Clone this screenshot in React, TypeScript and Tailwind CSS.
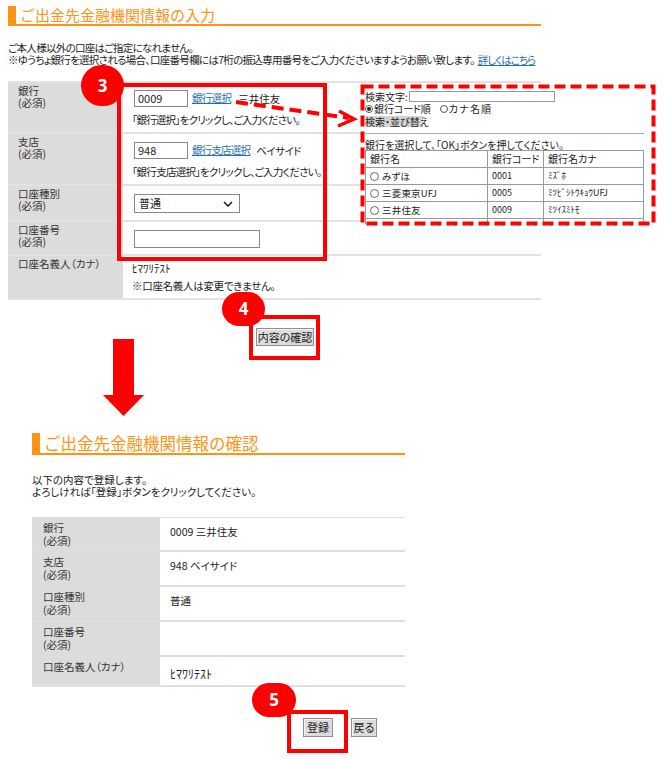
const FONT = "[font-family:'Noto_Sans_CJK_JP','Liberation_Sans',sans-serif] [font-feature-settings:'palt']";

function Heading({ text, className, textClass }: { text: string; className: string; textClass: string }) {
  return (
    <div className={`flex items-stretch border-b-2 border-[#ff9313] ${className}`}>
      <div className="w-[8px] bg-[#ff9313]" />
      <div className={`pl-[4px] text-[#ff9313] [font-feature-settings:normal] ${textClass}`}>{text}</div>
    </div>
  );
}

function Label({ main, req = true, lead }: { main: string; req?: boolean; lead: string }) {
  return (
    <div className={`text-[10.5px] text-[#333] ${lead}`}>
      <div>{main}</div>
      {req && <div>(必須)</div>}
    </div>
  );
}

function FormRow({ label, req, h, children }: { label: string; req?: boolean; h: string; children?: React.ReactNode }) {
  return (
    <div className={`flex border-b-2 border-[#e2e2e2] ${h}`}>
      <div className="w-[115px] shrink-0 bg-[#dcdcdc] pl-[10px] pt-[2px]">
        <Label main={label} req={req} lead="leading-[12px]" />
      </div>
      <div className="min-w-0 flex-1 pl-[9px] text-[10.5px] text-[#222]">{children}</div>
    </div>
  );
}

function ConfirmRow({ label, req, h, children }: { label: string; req?: boolean; h: string; children?: React.ReactNode }) {
  return (
    <div className={`flex border-b-2 border-[#dedede] ${h}`}>
      <div className="w-[128px] shrink-0 bg-[#dcdcdc] pl-[11px] pt-[3px]">
        <Label main={label} req={req} lead="leading-[13px]" />
      </div>
      <div className="flex-1 pl-[10px] pt-[7px] text-[10.5px] leading-[14px] text-[#222]">{children}</div>
    </div>
  );
}

function GrayButton({ children, className }: { children: React.ReactNode; className: string }) {
  return (
    <div className={`flex items-center justify-center border border-[#8f8f8f] bg-[#dcdcdc] text-[11px] text-[#222] shadow-[inset_1px_1px_0_#f4f4f4] ${className}`}>
      {children}
    </div>
  );
}

function Badge({ n, className }: { n: string; className: string }) {
  return (
    <div className={`absolute flex items-center justify-center rounded-full bg-[#ff0000] text-[17px] font-bold text-white [font-family:'Open_Sans',sans-serif] ${className}`}>
      {n}
    </div>
  );
}

const bankRows = [
  ["みずほ", "0001", "ﾐｽﾞﾎ"],
  ["三菱東京UFJ", "0005", "ﾐﾂﾋﾞｼﾄｳｷｮｳUFJ"],
  ["三井住友", "0009", "ﾐﾂｲｽﾐﾄﾓ"],
];

function BankPanel() {
  return (
    <div className="absolute left-[361px] top-[85px] h-[139px] w-[293px] overflow-hidden bg-white pl-[4px] pt-[6px] text-[10px] leading-[11px] text-[#222]">
      <div className="flex items-center">
        <span>検索文字:</span>
        <div className="ml-[1px] h-[11px] w-[146px] border border-[#999] bg-white" />
      </div>
      <div className="flex items-center pt-[1px]">
        <span className="relative mr-[1px] inline-block h-[8px] w-[8px] rounded-full border border-[#555]">
          <span className="absolute left-[1px] top-[1px] h-[4px] w-[4px] rounded-full bg-[#222]" />
        </span>
        <span className="tracking-[-0.1px]">銀行コード順</span>
        <span className="ml-[9px] mr-[1px] inline-block h-[8px] w-[8px] rounded-full border border-[#555]" />
        <span className="tracking-[1.2px]">カナ名順</span>
      </div>
      <div className="mt-[2px] h-[11px] w-[58px] whitespace-nowrap bg-[#d4d4d4] leading-[11px]">検索・並び替え</div>
      <div className="mt-[6px] h-px w-[279px] bg-[#aaa]" />
      <div className="mt-[6px] h-[10px] whitespace-nowrap leading-[10px]">銀行を選択して、「OK」ボタンを押してください。</div>
      <div className="w-[279px] border-l border-t border-[#999]">
        <div className="flex h-[17px] border-b border-[#999]">
          <div className="w-[122px] border-r border-[#999] pl-[4px] leading-[16px]">銀行名</div>
          <div className="w-[56px] border-r border-[#999] pl-[4px] leading-[16px]">銀行コード</div>
          <div className="w-[100px] border-r border-[#999] pl-[4px] leading-[16px]">銀行名カナ</div>
        </div>
        {bankRows.map((r) => (
          <div key={r[1]} className="flex h-[17px] border-b border-[#999]">
            <div className="flex w-[122px] items-center border-r border-[#999] pl-[4px]">
              <span className="mr-[3px] inline-block h-[9px] w-[9px] rounded-full border border-[#666]" />
              <span className="text-[9.5px] tracking-[0.2px]">{r[0]}</span>
            </div>
            <div className="w-[56px] border-r border-[#999] pl-[4px] text-[9px] leading-[16px]">{r[1]}</div>
            <div className="w-[100px] border-r border-[#999] pl-[4px] text-[9px] leading-[16px]">{r[2]}</div>
          </div>
        ))}
        <div className="flex h-[17px]">
          <div className="w-[122px] border-r border-[#999]" />
          <div className="w-[56px] border-r border-[#999]" />
          <div className="w-[100px] border-r border-[#999]" />
        </div>
      </div>
    </div>
  );
}

export default function App() {
  return (
    <div className={`relative h-[759px] w-[665px] overflow-hidden bg-white ${FONT}`}>
      {/* input form */}
      <div className="pl-[8px] pt-[6px]">
        <Heading text="ご出金先金融機関情報の入力" className="h-[20px] w-[533px]" textClass="text-[15px] leading-[18px]" />
        <div className="mt-[16px] whitespace-nowrap text-[10.5px] leading-[12px] tracking-[-0.7px] text-[#222]">
          <div>ご本人様以外の口座はご指定になれません。</div>
          <div>
            ※ゆうちょ銀行を選択される場合、口座番号欄には7桁の振込専用番号をご入力くださいますようお願い致します。
            <span className="ml-[3px] tracking-[-1px] text-[#1f6fb5] underline">詳しくはこちら</span>
          </div>
        </div>
        <div className="mt-[15px] w-[533px] border-t-2 border-[#e2e2e2]">
          <FormRow label="銀行" h="h-[51px]">
            <div className="flex items-center pt-[7px]">
              <div className="ml-[2px] h-[17px] w-[54px] border border-[#888] pl-[3px] text-[11px] leading-[15px]">0009</div>
              <span className="ml-[4px] -translate-y-[1px] tracking-[-0.7px] text-[#1f6fb5] underline">銀行選択</span>
              <span className="ml-[7px]">三井住友</span>
            </div>
            <div className="mt-[5px] whitespace-nowrap leading-[16px] tracking-[-0.8px]">「銀行選択」をクリックし、ご入力ください。</div>
          </FormRow>
          <FormRow label="支店" h="h-[52px]">
            <div className="flex items-center pt-[8px]">
              <div className="ml-[2px] h-[17px] w-[54px] border border-[#888] pl-[3px] text-[11px] leading-[15px]">948</div>
              <span className="ml-[4px] -translate-y-[1px] tracking-[-0.8px] text-[#1f6fb5] underline">銀行支店選択</span>
              <span className="ml-[6px] tracking-[-0.5px]">ベイサイド</span>
            </div>
            <div className="mt-[5px] whitespace-nowrap leading-[16px] tracking-[-0.7px]">「銀行支店選択」をクリックし、ご入力ください。</div>
          </FormRow>
          <FormRow label="口座種別" h="h-[36px]">
            <div className="ml-[2px] mt-[8px] flex h-[19px] w-[106px] items-center justify-between border border-[#888] pl-[4px] pr-[6px] text-[11px]">
              <span>普通</span>
              <svg width="10" height="6" viewBox="0 0 10 6" fill="none" stroke="#222" strokeWidth="1.6">
                <path d="M1 1l4 4 4-4" />
              </svg>
            </div>
          </FormRow>
          <FormRow label="口座番号" h="h-[34px]">
            <div className="ml-[2px] mt-[8px] h-[18px] w-[126px] border border-[#888]" />
          </FormRow>
          <FormRow label="口座名義人（カナ）" req={false} h="h-[44px]">
            <div className="pt-[5px] text-[11px] leading-[14px]">ﾋﾏﾜﾘﾃｽﾄ</div>
            <div className="pt-[3px] leading-[16px] tracking-[-0.3px]">※口座名義人は変更できません。</div>
          </FormRow>
        </div>
        <div className="flex w-[306px] justify-end pt-[28px]">
          <GrayButton className="h-[18px] w-[58px]">内容の確認</GrayButton>
        </div>
      </div>

      {/* confirmation */}
      <div className="pl-[32px] pt-[87px]">
        <Heading text="ご出金先金融機関情報の確認" className="h-[22px] w-[373px]" textClass="text-[16.5px] leading-[20px]" />
        <div className="mt-[19px] text-[10.5px] leading-[12px] text-[#222]">
          <div>以下の内容で登録します。</div>
          <div>よろしければ「登録」ボタンをクリックしてください。</div>
        </div>
        <div className="mt-[19px] w-[373px] border-t border-[#dedede]">
          <ConfirmRow label="銀行" h="h-[34px]">0009 三井住友</ConfirmRow>
          <ConfirmRow label="支店" h="h-[35px]">948 ベイサイド</ConfirmRow>
          <ConfirmRow label="口座種別" h="h-[35px]">普通</ConfirmRow>
          <ConfirmRow label="口座番号" h="h-[35px]" />
          <ConfirmRow label="口座名義人（カナ）" req={false} h="h-[30px]">
            <div className="pt-[3px] text-[12px] leading-[14px]">ﾋﾏﾜﾘﾃｽﾄ</div>
          </ConfirmRow>
        </div>
        <div className="flex gap-[18px] pl-[271px] pt-[31px]">
          <GrayButton className="h-[19px] w-[30px]">登録</GrayButton>
          <GrayButton className="h-[19px] w-[26px]">戻る</GrayButton>
        </div>
      </div>

      <BankPanel />

      {/* annotations */}
      <div className="absolute left-[117px] top-[83px] h-[178px] w-[210px] border-[4px] border-[#ff0000]" />
      <div className="absolute left-[249px] top-[315px] h-[45px] w-[71px] border-[4px] border-[#ff0000]" />
      <div className="absolute left-[287px] top-[710px] h-[43px] w-[61px] border-[4px] border-[#ff0000]" />
      <Badge n="3" className="left-[81px] top-[65px] h-[41px] w-[43px]" />
      <Badge n="4" className="left-[222px] top-[292px] h-[34px] w-[43px]" />
      <Badge n="5" className="left-[252px] top-[683px] h-[34px] w-[44px]" />

      <svg className="absolute left-0 top-0" width="665" height="759" fill="none">
        <rect x="362.5" y="86.5" width="291" height="137" stroke="#ff0000" strokeWidth="4" strokeDasharray="11 5" />
        <path d="M236 102L349 118" stroke="#ff0000" strokeWidth="4" strokeDasharray="12 6" />
        <path d="M339 111L354 119L338 126" stroke="#ff0000" strokeWidth="3.5" />
        <path d="M113 339H134V395H144L123.5 416L103 395H113Z" fill="#ff0000" />
      </svg>
    </div>
  );
}
